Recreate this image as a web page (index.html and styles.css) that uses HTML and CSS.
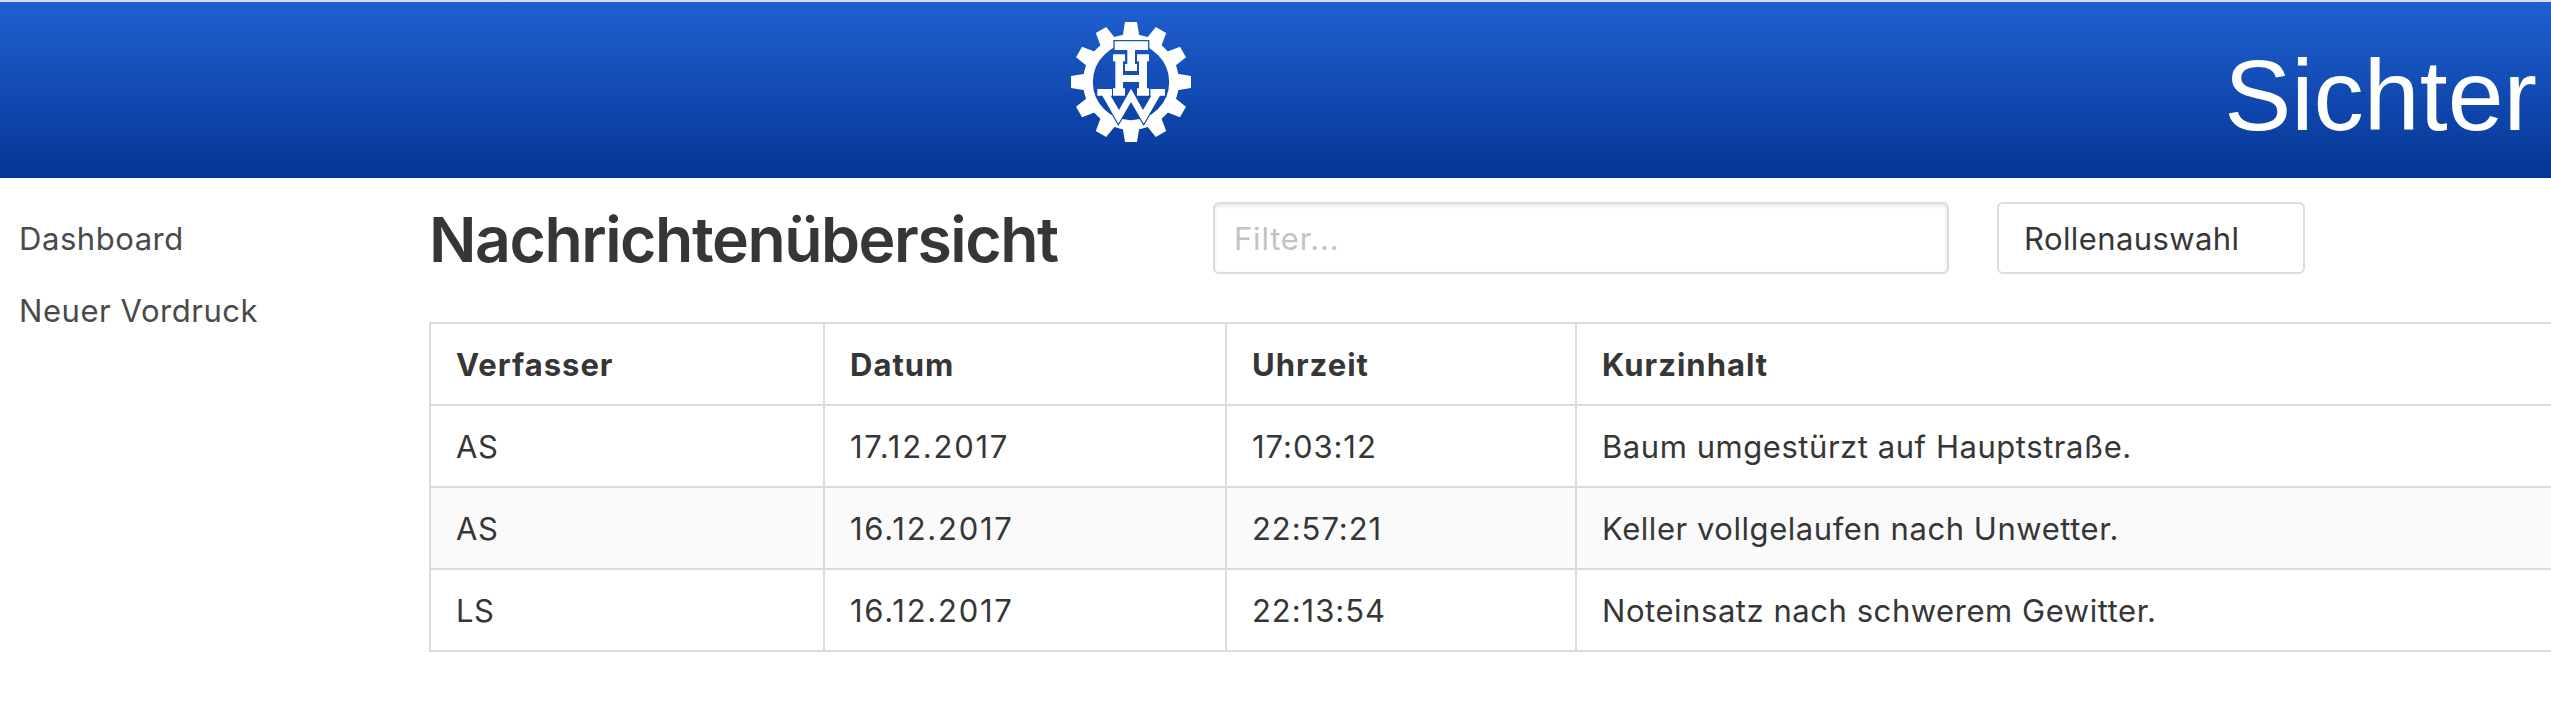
FILE: index.html
```html
<!DOCTYPE html>
<html lang="de">
<head>
<meta charset="utf-8">
<title>Nachrichtenübersicht</title>
<link rel="stylesheet" href="styles.css">
</head>
<body>
<header class="topbar">
  <svg class="logo" viewBox="63 66 360 360" role="img" aria-label="THW">
    <defs>
      <path id="tooth" d="M215 112 L219 103 L225 66 H261 L267 103 L271 112 Z"/>
      <path id="letter-t" d="M194 124H294V150H255V192H261V213H225V192H232V150H194Z"/>
      <path id="letter-w" d="M142 267H186V287H182L207 330L243 266L279 330L304 287H301V267H345V287H330L281 371L243 306L205 371L157 287H142Z"/>
      <mask id="cut" maskUnits="userSpaceOnUse" x="63" y="66" width="360" height="360">
        <rect x="63" y="66" width="360" height="360" fill="#fff"/>
        <use href="#letter-t" fill="#000" stroke="#000" stroke-width="8"/>
        <use href="#letter-w" fill="#000" stroke="#000" stroke-width="7"/>
      </mask>
    </defs>
    <g fill="#fff">
      <g mask="url(#cut)">
        <circle cx="243" cy="246" r="129" fill="none" stroke="#fff" stroke-width="29"/>
        <use href="#tooth"/>
        <use href="#tooth" transform="rotate(30 243 246)"/>
        <use href="#tooth" transform="rotate(60 243 246)"/>
        <use href="#tooth" transform="rotate(90 243 246)"/>
        <use href="#tooth" transform="rotate(120 243 246)"/>
        <use href="#tooth" transform="rotate(150 243 246)"/>
        <use href="#tooth" transform="rotate(180 243 246)"/>
        <use href="#tooth" transform="rotate(210 243 246)"/>
        <use href="#tooth" transform="rotate(240 243 246)"/>
        <use href="#tooth" transform="rotate(270 243 246)"/>
        <use href="#tooth" transform="rotate(300 243 246)"/>
        <use href="#tooth" transform="rotate(330 243 246)"/>
      </g>
      <use href="#letter-t"/>
      <path d="M189 163H225V184H219V225H267V184H261V163H297V184H291V265H297V287H261V265H267V246H219V265H225V287H189V265H196V184H189Z"/>
      <use href="#letter-w"/>
    </g>
  </svg>
  <div class="role">Sichter</div>
</header>
<div class="page">
  <nav class="menu">
    <a class="menu-item">Dashboard</a>
    <a class="menu-item">Neuer Vordruck</a>
  </nav>
  <main class="content">
    <div class="toolbar">
      <h1 class="title">Nachrichtenübersicht</h1>
      <input class="filter" type="text" placeholder="Filter...">
      <div class="select">Rollenauswahl</div>
    </div>
    <table class="messages">
      <colgroup><col class="c-author"><col class="c-date"><col class="c-time"><col></colgroup>
      <thead>
        <tr><th>Verfasser</th><th>Datum</th><th>Uhrzeit</th><th>Kurzinhalt</th></tr>
      </thead>
      <tbody>
        <tr><td>AS</td><td class="date">17.12.2017</td><td class="time">17:03:12</td><td>Baum umgestürzt auf Hauptstraße.</td></tr>
        <tr><td>AS</td><td class="date">16.12.2017</td><td class="time">22:57:21</td><td>Keller vollgelaufen nach Unwetter.</td></tr>
        <tr><td>LS</td><td class="date">16.12.2017</td><td class="time">22:13:54</td><td>Noteinsatz nach schwerem Gewitter.</td></tr>
      </tbody>
    </table>
  </main>
</div>
</body>
</html>
```
FILE: styles.css
```css
* { box-sizing: border-box; }
body {
  margin: 0;
  height: 710px;
  overflow: hidden;
  background: #fff;
  color: #363636;
  font: 31px/48px Inter, "Noto Sans", sans-serif;
  letter-spacing: .55px;
}
.topbar {
  display: flex;
  justify-content: space-between;
  height: 178px;
  padding: 20px 14px 0 1071px;
  border-top: 2px solid #dcdee3;
  background: linear-gradient(#1f60d1, #053594);
}
.logo { display: block; width: 120px; height: 120px; }
.role {
  padding-top: 16px;
  color: #fff;
  font: 100.5px/114px "Liberation Sans", Arial, sans-serif;
  letter-spacing: 0;
}
.page { display: flex; }
.menu { display: flex; flex-direction: column; flex: 0 0 429px; padding: 25px 0 0 19px; }
.menu-item { height: 72px; padding: 12px 0; color: #4a4a4a; }
.content { flex: 0 0 2170px; padding-top: 24px; }
.toolbar { display: flex; height: 72px; margin-bottom: 48px; }
.title {
  width: 784px;
  margin: 0;
  font-size: 62.5px;
  font-weight: 600;
  line-height: 74px;
  letter-spacing: -1.45px;
}
.filter {
  width: 736px;
  height: 72px;
  margin: 0 48px 0 0;
  padding: 1px 19px 0;
  border: 2px solid #dbdbdb;
  border-radius: 6px;
  box-shadow: inset 0 2px 4px rgba(10, 10, 10, .1);
  background: #fff;
  font: inherit;
  letter-spacing: .8px;
}
.filter::placeholder { color: #c3c3c3; opacity: 1; }
.select { width: 308px; padding: 11px 25px 9px; border: 2px solid #dbdbdb; border-radius: 6px; letter-spacing: .4px; }
.messages { width: 2170px; table-layout: fixed; border-collapse: collapse; }
.c-author { width: 394px; }
.c-date { width: 402px; }
.c-time { width: 350px; }
.messages th, .messages td {
  height: 82px;
  padding: 17px 24px 15px 25px;
  border: 2px solid #dbdbdb;
  text-align: left;
  white-space: nowrap;
}
.messages th { font-weight: 700; letter-spacing: 1px; }
.messages .date { letter-spacing: 1.75px; }
.messages .time { letter-spacing: .95px; }
.messages tbody tr:nth-child(even) { background: #fafafa; }
```
